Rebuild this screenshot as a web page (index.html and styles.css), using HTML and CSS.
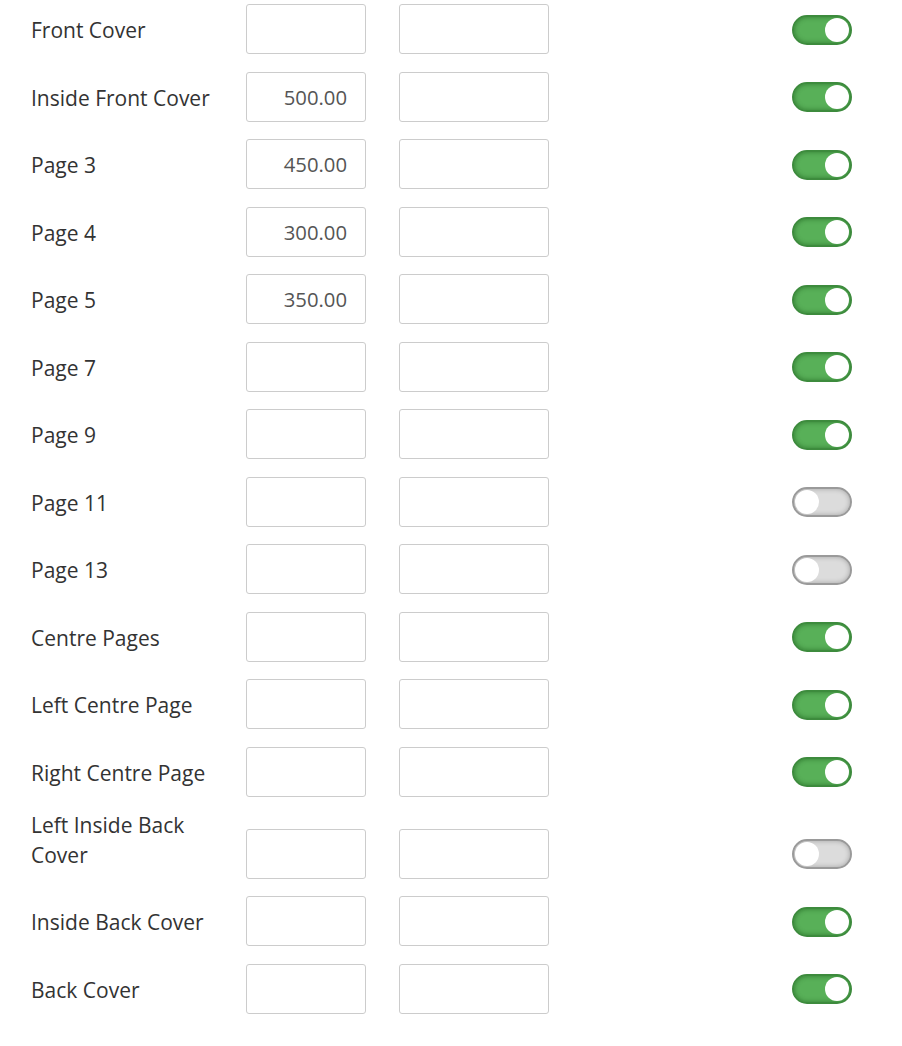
FILE: index.html
```html
<!DOCTYPE html>
<html lang="en">
<head>
    <meta charset="UTF-8">
    <meta name="viewport" content="width=device-width, initial-scale=1.0">
    <title>Page Prices</title>
    <link rel="stylesheet" href="styles.css">
</head>
<body>
    <div class="price-list">
        <div class="row">
            <div class="row-label">Front Cover</div>
            <input class="price" type="text" value="">
            <input class="note" type="text" value="">
            <label class="switch"><input type="checkbox" checked><span class="slider"></span></label>
        </div>
        <div class="row">
            <div class="row-label">Inside Front Cover</div>
            <input class="price" type="text" value="500.00">
            <input class="note" type="text" value="">
            <label class="switch"><input type="checkbox" checked><span class="slider"></span></label>
        </div>
        <div class="row">
            <div class="row-label">Page 3</div>
            <input class="price" type="text" value="450.00">
            <input class="note" type="text" value="">
            <label class="switch"><input type="checkbox" checked><span class="slider"></span></label>
        </div>
        <div class="row">
            <div class="row-label">Page 4</div>
            <input class="price" type="text" value="300.00">
            <input class="note" type="text" value="">
            <label class="switch"><input type="checkbox" checked><span class="slider"></span></label>
        </div>
        <div class="row">
            <div class="row-label">Page 5</div>
            <input class="price" type="text" value="350.00">
            <input class="note" type="text" value="">
            <label class="switch"><input type="checkbox" checked><span class="slider"></span></label>
        </div>
        <div class="row">
            <div class="row-label">Page 7</div>
            <input class="price" type="text" value="">
            <input class="note" type="text" value="">
            <label class="switch"><input type="checkbox" checked><span class="slider"></span></label>
        </div>
        <div class="row">
            <div class="row-label">Page 9</div>
            <input class="price" type="text" value="">
            <input class="note" type="text" value="">
            <label class="switch"><input type="checkbox" checked><span class="slider"></span></label>
        </div>
        <div class="row">
            <div class="row-label">Page 11</div>
            <input class="price" type="text" value="">
            <input class="note" type="text" value="">
            <label class="switch"><input type="checkbox"><span class="slider"></span></label>
        </div>
        <div class="row">
            <div class="row-label">Page 13</div>
            <input class="price" type="text" value="">
            <input class="note" type="text" value="">
            <label class="switch"><input type="checkbox"><span class="slider"></span></label>
        </div>
        <div class="row">
            <div class="row-label">Centre Pages</div>
            <input class="price" type="text" value="">
            <input class="note" type="text" value="">
            <label class="switch"><input type="checkbox" checked><span class="slider"></span></label>
        </div>
        <div class="row">
            <div class="row-label">Left Centre Page</div>
            <input class="price" type="text" value="">
            <input class="note" type="text" value="">
            <label class="switch"><input type="checkbox" checked><span class="slider"></span></label>
        </div>
        <div class="row">
            <div class="row-label">Right Centre Page</div>
            <input class="price" type="text" value="">
            <input class="note" type="text" value="">
            <label class="switch"><input type="checkbox" checked><span class="slider"></span></label>
        </div>
        <div class="row">
            <div class="row-label">Left Inside Back Cover</div>
            <input class="price" type="text" value="">
            <input class="note" type="text" value="">
            <label class="switch"><input type="checkbox"><span class="slider"></span></label>
        </div>
        <div class="row">
            <div class="row-label">Inside Back Cover</div>
            <input class="price" type="text" value="">
            <input class="note" type="text" value="">
            <label class="switch"><input type="checkbox" checked><span class="slider"></span></label>
        </div>
        <div class="row">
            <div class="row-label">Back Cover</div>
            <input class="price" type="text" value="">
            <input class="note" type="text" value="">
            <label class="switch"><input type="checkbox" checked><span class="slider"></span></label>
        </div>
    </div>
</body>
</html>
```
FILE: styles.css
```css
body{
    margin: 0;
    background: #fff;
    font-family: "Open Sans", "Liberation Sans", sans-serif;
    color: #333;
}

.price-list{
    display: flex;
    flex-direction: column;
    gap: 17.5px;
    padding: 4px 50px 0 31px;
}

.row{
    display: flex;
    align-items: flex-end;
}

.row-label{
    width: 200px;
    margin-right: 15px;
    font-size: 21px;
    line-height: 30px;
    padding-bottom: 9px;
    margin-top: -4.5px;
}

.row input[type="text"]{
    box-sizing: border-box;
    height: 50px;
    border: 1px solid #ccc;
    border-radius: 3px;
    background: #fff;
    font-family: "Open Sans", "Liberation Sans", sans-serif;
    font-size: 20.3px;
    color: #555;
    text-align: right;
    padding: 0 18px;
    margin: 0;
    outline: none;
}

.price{
    width: 120px;
}

.note{
    width: 150px;
    margin-left: 33px !important;
}

/* 스위치 */
.switch{
    margin-left: auto;
    margin-bottom: 9.5px;
    display: block;
    width: 60px;
    height: 30px;
    position: relative;
}

.switch input{
    display: none;
}

.slider{
    display: block;
    box-sizing: border-box;
    width: 60px;
    height: 30px;
    border-radius: 15px;
    border: 2px solid #9a9a9a;
    background: #dcdcdc;
    box-shadow: inset 0 0 5px rgba(0, 0, 0, 0.25);
    position: relative;
}

.slider::after{
    content: "";
    position: absolute;
    top: 1px;
    left: 1px;
    width: 24px;
    height: 24px;
    border-radius: 50%;
    background: #fff;
}

.switch input:checked + .slider{
    border-color: #3d8b3d;
    background: #58b058;
    box-shadow: inset 0 0 5px rgba(0, 60, 0, 0.45);
}

.switch input:checked + .slider::after{
    left: 31px;
}
```
